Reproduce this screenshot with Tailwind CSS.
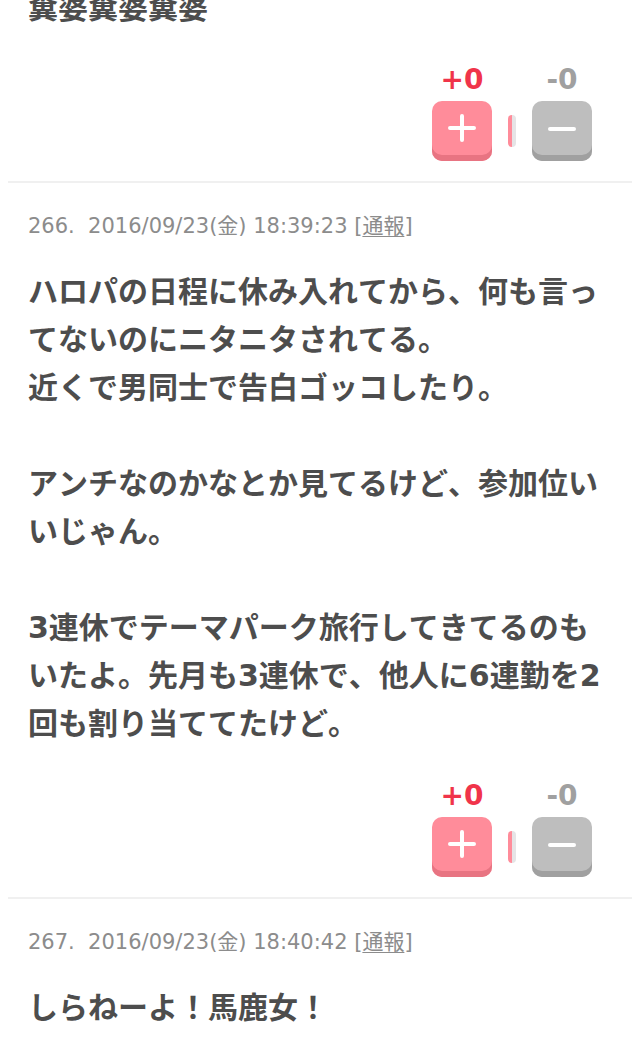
<!DOCTYPE html>
<html lang="ja">
<head>
  <meta charset="UTF-8">
  <meta name="viewport" content="width=device-width, initial-scale=1">
  <title>コメント一覧</title>
  <script src="https://cdn.jsdelivr.net/npm/@tailwindcss/browser@4"></script>
</head>

<body class="bg-white px-2 font-['DejaVu_Sans','Noto_Sans_CJK_JP',sans-serif] text-[#4d4d4d] [font-kerning:none]">
<main class="-mt-4 overflow-hidden">

  <!-- 265 -->
  <article class="border-b-2 border-[#f0f0f0] px-5 pb-5">
    <p class="text-[30px] leading-[48px] font-bold">糞婆糞婆糞婆</p>
    <div class="mt-[33px] mr-5 flex justify-end items-end gap-4">
      <div class="w-15 text-center">
        <div class="text-[28px] leading-[30px] pb-1.5 font-bold text-[#f0344a]">+0</div>
        <button type="button" aria-label="プラス" class="block size-15 rounded-[10px] bg-[#ff8c9a] shadow-[inset_0_-6px_0_#e87482]">
          <svg class="mx-auto size-15" viewBox="0 0 60 60" fill="none" stroke="white" stroke-width="4" stroke-linecap="round"><path d="M18 27h24M30 15v24"/></svg>
        </button>
      </div>
      <div class="w-2 h-8 mb-[14px] flex rounded-sm overflow-hidden"><span class="flex-1 bg-[#ff8c9a]"></span><span class="flex-1 bg-[#e6e4e6]"></span></div>
      <div class="w-15 text-center">
        <div class="text-[28px] leading-[30px] pb-1.5 font-bold text-[#a0a0a0]">-0</div>
        <button type="button" aria-label="マイナス" class="block size-15 rounded-[10px] bg-[#bebebe] shadow-[inset_0_-6px_0_#a0a0a0]">
          <svg class="mx-auto size-15" viewBox="0 0 60 60" fill="none" stroke="white" stroke-width="4" stroke-linecap="round"><path d="M18 28h24"/></svg>
        </button>
      </div>
    </div>
  </article>

  <!-- 266 -->
  <article class="border-b-2 border-[#f0f0f0] px-5 pt-[27px] pb-5">
    <p class="text-[21px] leading-8 text-[#8c8c8c] whitespace-pre">266.  2016/09/23(金) 18:39:23 [<a href="#" class="underline decoration-1 underline-offset-3">通報</a>]</p>
    <p class="mt-[26px] text-[30px] leading-[48px] font-bold">ハロパの日程に休み入れてから、何も言ってないのにニタニタされてる。<br>近くで男同士で告白ゴッコしたり。<br><br>アンチなのかなとか見てるけど、参加位いいじゃん。<br><br>3連休でテーマパーク旅行してきてるのもいたよ。先月も3連休で、他人に6連勤を2回も割り当ててたけど。</p>
    <div class="mt-[33px] mr-5 flex justify-end items-end gap-4">
      <div class="w-15 text-center">
        <div class="text-[28px] leading-[30px] pb-1.5 font-bold text-[#f0344a]">+0</div>
        <button type="button" aria-label="プラス" class="block size-15 rounded-[10px] bg-[#ff8c9a] shadow-[inset_0_-6px_0_#e87482]">
          <svg class="mx-auto size-15" viewBox="0 0 60 60" fill="none" stroke="white" stroke-width="4" stroke-linecap="round"><path d="M18 27h24M30 15v24"/></svg>
        </button>
      </div>
      <div class="w-2 h-8 mb-[14px] flex rounded-sm overflow-hidden"><span class="flex-1 bg-[#ff8c9a]"></span><span class="flex-1 bg-[#e6e4e6]"></span></div>
      <div class="w-15 text-center">
        <div class="text-[28px] leading-[30px] pb-1.5 font-bold text-[#a0a0a0]">-0</div>
        <button type="button" aria-label="マイナス" class="block size-15 rounded-[10px] bg-[#bebebe] shadow-[inset_0_-6px_0_#a0a0a0]">
          <svg class="mx-auto size-15" viewBox="0 0 60 60" fill="none" stroke="white" stroke-width="4" stroke-linecap="round"><path d="M18 28h24"/></svg>
        </button>
      </div>
    </div>
  </article>

  <!-- 267 -->
  <article class="px-5 pt-[27px]">
    <p class="text-[21px] leading-8 text-[#8c8c8c] whitespace-pre">267.  2016/09/23(金) 18:40:42 [<a href="#" class="underline decoration-1 underline-offset-3">通報</a>]</p>
    <p class="mt-[26px] text-[30px] leading-[48px] font-bold">しらねーよ！馬鹿女！</p>
  </article>

</main>
</body>
</html>
